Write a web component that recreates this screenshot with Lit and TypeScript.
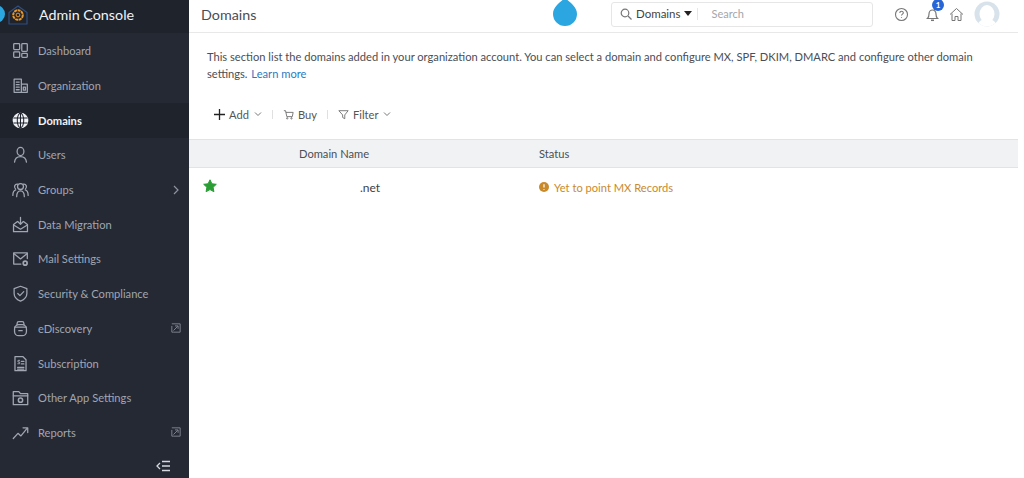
import { LitElement, html, css, svg } from "lit";
import { customElement } from "lit/decorators.js";

const s = (inner: unknown, box = "0 0 20 20") => html`<svg class="ic" viewBox=${box} fill="none" stroke="currentColor" stroke-width="1.500" stroke-linejoin="round" stroke-linecap="round">${inner}</svg>`;

const icons: Record<string, unknown> = {
  dash: s(svg`<rect x="2" y="2" width="7" height="7" rx="1"/><rect x="11.500" y="2" width="6.500" height="9" rx="1"/><rect x="2" y="11.500" width="7" height="6.500" rx="1"/><rect x="11.500" y="13.500" width="6.500" height="4.500" rx="1"/>`),
  org: s(svg`<path d="M2.500 18V2.500h8.500V18M2.500 18h15.500V8.500H11"/><path d="M5 6h3.500M5 9h3.500M5 12h3.500M5 15h3.500M13.300 12h2.500v3.500h-2.500z"/>`),
  globe: s(svg`<circle cx="10" cy="10" r="8.500" fill="#f0f2f5" stroke="#f0f2f5"/><g stroke="#1f232c" stroke-width="1.200"><ellipse cx="10" cy="10" rx="3.800" ry="8.500"/><path d="M2 7h16M2 13h16M10 1.500v17"/></g>`),
  user: s(svg`<ellipse cx="10" cy="6.500" rx="4" ry="4.800"/><path d="M3 19c.4-4.200 3-6.500 7-6.500s6.600 2.300 7 6.500"/>`),
  groups: s(svg`<circle cx="10" cy="6.500" r="3.500"/><path d="M5.500 18.500c0-4.500 1.800-7 4.500-7s4.500 2.500 4.500 7"/><path d="M6.500 3.800a3 3 0 0 0-2.500 5.200M13.500 3.800a3 3 0 0 1 2.500 5.200M4.500 10.500C2.500 11 1 14 1 17M15.500 10.500c2 .5 3.500 3.500 3.500 6.500"/>`),
  migrate: s(svg`<path d="M6.500 6.500L1.800 10v8.500h16.400V10l-4.700-3.500"/><path d="M2 10.500l8 5 8-5M10 1.500v8M7 6.800l3 3 3-3"/>`),
  mail: s(svg`<path d="M10.500 16.500H2V3.500h16v6.500"/><path d="M2 4l8 6.500L18 4"/><circle cx="15.500" cy="15.500" r="2.300" stroke-width="2"/>`),
  shield: s(svg`<path d="M10 1.500l7.500 2.800v5.700c0 4.200-3.200 7.200-7.500 9-4.300-1.800-7.500-4.800-7.500-9V4.300z"/><path d="M6.800 10l2.500 2.500L13.800 7.800"/>`),
  disc: s(svg`<path d="M6 5.500V4c0-1.200 1-2 2-2h4c1 0 2 .8 2 2v1.500"/><rect x="3" y="5.500" width="14" height="13" rx="5"/><path d="M3 8.500h14M8 12.500h4"/>`),
  sub: s(svg`<path d="M3.500 2h9.500l3.500 3.500V18.500h-13z"/><path d="M6.500 14.500h7.500M6.500 16.500h7.500M11 7.500h3M11 10.500h3"/><path d="M9 6.300H7v2h2v2H6.800" stroke-width="1.100"/>`),
  app: s(svg`<path d="M1.500 18.500V3h6.500L10 5.500h8.500v13z"/><path d="M1.500 8h17"/><circle cx="10" cy="13.200" r="2.500" stroke-width="1.800"/>`),
  reports: s(svg`<path d="M1.500 17l5.500-6 3.500 3L17.500 5.500"/><path d="M13 4.500h5.500V10"/>`),
};

const ext = html`<svg class="ext" viewBox="0 0 12 12" fill="none" stroke="currentColor" stroke-width="1"><path d="M1 1h10v10H3"/><path d="M1 3.500V11H3"/><path d="M3 9L8 4M4.800 3.500H8.500V7"/></svg>`;
const chev = html`<svg class="chev" viewBox="0 0 8 8" fill="none" stroke="currentColor" stroke-width="1"><path d="M1 2.500l3 3 3-3"/></svg>`;

const items = [
  ["dash", "Dashboard"], ["org", "Organization"], ["globe", "Domains", "active"], ["user", "Users"],
  ["groups", "Groups", "arrow"], ["migrate", "Data Migration"], ["mail", "Mail Settings"],
  ["shield", "Security & Compliance"], ["disc", "eDiscovery", "ext"], ["sub", "Subscription"],
  ["app", "Other App Settings"], ["reports", "Reports", "ext"],
];

@customElement("app-root")
export class AppRoot extends LitElement {
  static styles = css`
    :host { display: grid; grid-template-columns: 189px 1fr; height: 478px; width: 1024px; overflow: hidden; font-family: Lato, "Liberation Sans", sans-serif; background: #fff; color: #333; }
    * { box-sizing: border-box; }
    .ic { width: 17px; height: 17px; flex: none; }
    aside { background: #252934; display: flex; flex-direction: column; color: #a0a6b2; position: relative; }
    .brand { height: 33px; background: #1f232c; display: flex; align-items: center; padding: 0 0 4px 8px; gap: 11px; color: #f1f2f4; font-size: 14.300px; position: relative; }
    .brand svg { width: 20px; height: 20px; flex: none; }
    .blob { position: absolute; left: -13px; top: 5px; width: 18px; height: 18px; border-radius: 50%; background: #2ca6e0; }
    nav { display: flex; flex-direction: column; padding-top: 0.500px; }
    .item { height: 34.700px; display: flex; align-items: center; padding-left: 12px; gap: 9px; font-size: 11.150px; }
    .item span { flex: 1; }
    .item.active { background: #1f232c; color: #f0f2f5; font-weight: 700; }
    .arrow { width: 8px; height: 10px; margin-right: 9px; color: #8d93a0; }
    .ext { width: 10px; height: 10px; margin-right: 8px; color: #8d93a0; }
    .collapse { position: absolute; left: 156px; bottom: 6px; width: 14px; height: 12px; color: #d5d8de; }
    main { display: flex; flex-direction: column; min-width: 0; margin-right: 6px; }
    header { height: 33px; border-bottom: 1px solid #e8e8e8; display: flex; align-items: center; padding: 0 0 4px 12px; position: relative; }
    h1 { font-size: 14.300px; font-weight: 400; margin: 0; color: #4a4e55; flex: 1; }
    .drop { position: absolute; left: 364px; top: -3px; width: 24px; height: 29px; }
    .search { width: 262px; height: 25px; border: 1px solid #e6e6e6; border-radius: 3px; display: flex; align-items: center; padding: 0 0 1px 8px; font-size: 11.500px; color: #444; margin-right: 21px; }
    .search .mag { width: 12px; height: 12px; color: #777; margin-right: 4px; }
    .caret { width: 0; height: 0; border: 4px solid transparent; border-top: 5px solid #222; border-bottom: 0; margin: 0 5px 0 3px; }
    .sep { width: 1px; height: 12px; background: #e6e6e6; }
    .search .ph { color: #a4a6aa; margin-left: 14px; font-size: 11px; }
    .tools { display: flex; align-items: center; margin-right: 18px; color: #777; position: relative; }
    .tools svg { width: 15px; height: 15px; }
    .tools .help { margin-right: 16px; }
    .tools .bell { margin-right: 9px; }
    .badge { position: absolute; left: 38px; top: -2px; width: 12px; height: 12px; border-radius: 50%; background: #2866d8; color: #fff; font-size: 8px; font-weight: 700; display: flex; align-items: center; justify-content: center; }
    .tools .avatar { width: 26px; height: 26px; margin-left: 10px; }
    .intro { margin: 0; padding: 15px 18px 0; font-size: 11.150px; line-height: 17px; color: #4a4e55; height: 62px; }
    .intro a { color: #2b7abf; margin-left: 1px; }
    .bar { height: 44px; display: flex; align-items: center; padding: 0 0 6px 25px; font-size: 11.150px; color: #555; }
    .bar svg.t { width: 11px; height: 11px; margin-right: 4px; color: #666; flex: none; }
    .bar svg.plus { color: #222; margin-right: 4px; }
    .chev { width: 8px; height: 8px; margin-left: 5px; color: #777; }
    .bar .sep { height: 9px; margin: 0 10px; background: #e0e0e0; }
    .row { display: grid; grid-template-columns: 110px 240px 1fr; align-items: center; }
    .head { height: 29px; background: #f1f2f4; border-top: 1px solid #e2e3e5; border-bottom: 1px solid #e2e3e5; font-size: 11.150px; color: #4a4e55; }
    .body { height: 39px; padding-bottom: 1px; font-size: 12px; color: #3d4148; }
    .star { width: 14px; height: 14px; margin-left: 14px; margin-top: -2px; grid-column: 1; }
    .net { padding-left: 61px; }
    .status { color: #c98a2c; display: flex; align-items: center; gap: 5px; font-size: 11.150px; }
    .status svg { width: 10px; height: 10px; }
  `;

  render() {
    return html`
      <aside>
        <div class="brand">
          <div class="blob"></div>
          <svg viewBox="0 0 20 20" fill="none">
            <path d="M1 7.500L10 1 19 7.500V19H1z" stroke="#2f4f80" stroke-width="1.200" stroke-linejoin="round"/>
            <circle cx="10" cy="10" r="4.800" stroke="#e8972b" stroke-width="2" stroke-dasharray="3 .6"/>
            <circle cx="10" cy="10" r="1.900" stroke="#e8972b" stroke-width="1"/>
          </svg>
          Admin Console
        </div>
        <nav>
          ${items.map(([ic, label, extra]) => html`
            <div class="item ${extra === "active" ? "active" : ""}">
              ${icons[ic]}
              <span>${label}</span>
              ${extra === "arrow" ? html`<svg class="arrow" viewBox="0 0 8 10" fill="none" stroke="currentColor" stroke-width="1.200"><path d="M2 1l4 4-4 4"/></svg>` : ""}
              ${extra === "ext" ? ext : ""}
            </div>`)}
        </nav>
        <svg class="collapse" viewBox="0 0 14 12" fill="none" stroke="currentColor" stroke-width="1.300"><path d="M4 3L1 6l3 3M6 1.500h8M6 6h8M6 10.500h8"/></svg>
      </aside>
      <main>
        <header>
          <h1>Domains</h1>
          <svg class="drop" viewBox="0 0 24 29"><path d="M12 0C13.500 4 24 8 24 17a12 12 0 0 1-24 0C0 8 10.500 4 12 0z" fill="#2ca6e0"/></svg>
          <div class="search">
            <svg class="mag" viewBox="0 0 12 12" fill="none" stroke="currentColor" stroke-width="1.200"><circle cx="5" cy="5" r="3.800"/><path d="M8 8l3.500 3.500"/></svg>
            Domains<i class="caret"></i><i class="sep"></i><span class="ph">Search</span>
          </div>
          <div class="tools">
            <svg class="help" viewBox="0 0 15 15" fill="none" stroke="currentColor" stroke-width="1.100"><circle cx="7.500" cy="7.500" r="6"/><path d="M5.800 6c0-2.200 3.500-2.200 3.500-.2 0 1.300-1.800 1.300-1.800 2.800M7.500 10.200v.8"/></svg>
            <svg class="bell" viewBox="0 0 15 15" fill="none" stroke="currentColor" stroke-width="1.200"><path d="M2.500 11.500h10c-1.200-1-1.500-2-1.500-4.500 0-2.200-1.500-4-3.500-4S4 4.800 4 7c0 2.500-.3 3.500-1.500 4.500z"/><path d="M6 13.300h3" stroke-width="1.500"/></svg>
            <div class="badge">1</div>
            <svg viewBox="0 0 15 15" fill="none" stroke="currentColor" stroke-width="1"><path d="M1 7.500L7.500 1.500 14 7.500M3 6.500V13.500h3V9.500h3V13.500h3V6.500"/></svg>
            <svg class="avatar" viewBox="0 0 26 26"><defs><clipPath id="c"><circle cx="13" cy="13" r="12.500"/></clipPath></defs><g clip-path="url(#c)"><rect width="26" height="26" fill="#d8e2ea"/><ellipse cx="13" cy="13" rx="7.500" ry="9" fill="#fff"/><path d="M3 26c1-6 5-8 10-8s9 2 10 8z" fill="#fff"/></g></svg>
          </div>
        </header>
        <p class="intro">This section list the domains added in your organization account. You can select a domain and configure MX, SPF, DKIM, DMARC and configure other domain settings. <a>Learn more</a></p>
        <div class="bar">
          <svg class="t plus" viewBox="0 0 11 11" fill="none" stroke="currentColor" stroke-width="1.300"><path d="M5.500 0v11M0 5.500h11"/></svg>
          Add${chev}<i class="sep"></i>
          <svg class="t" viewBox="0 0 13 13" fill="none" stroke="currentColor" stroke-width="1"><path d="M1 2h2l1.500 7h6.500l1-5H3.500"/><circle cx="5" cy="11" r=".8"/><circle cx="10" cy="11" r=".8"/></svg>
          Buy<i class="sep"></i>
          <svg class="t" viewBox="0 0 13 13" fill="none" stroke="currentColor" stroke-width="1"><path d="M1 2h11L8 7v4.500L5.500 10V7z"/></svg>
          Filter${chev}
        </div>
        <div class="table">
          <div class="row head"><span></span><span>Domain Name</span><span>Status</span></div>
          <div class="row body">
            <svg class="star" viewBox="0 0 14 14"><path d="M7 .8l1.900 4 4.400.5-3.200 3 .8 4.400L7 10.600l-3.900 2.100.8-4.400-3.200-3 4.400-.5z" fill="#2a9d35" stroke="#2a9d35" stroke-linejoin="round"/></svg>
            <span class="net">.net</span>
            <span class="status"><svg viewBox="0 0 10 10"><circle cx="5" cy="5" r="5" fill="#c98a2c"/><path d="M5 2.200v3.200M5 7v.8" stroke="#fff" stroke-width="1.200"/></svg>Yet to point MX Records</span>
          </div>
        </div>
      </main>`;
  }
}
